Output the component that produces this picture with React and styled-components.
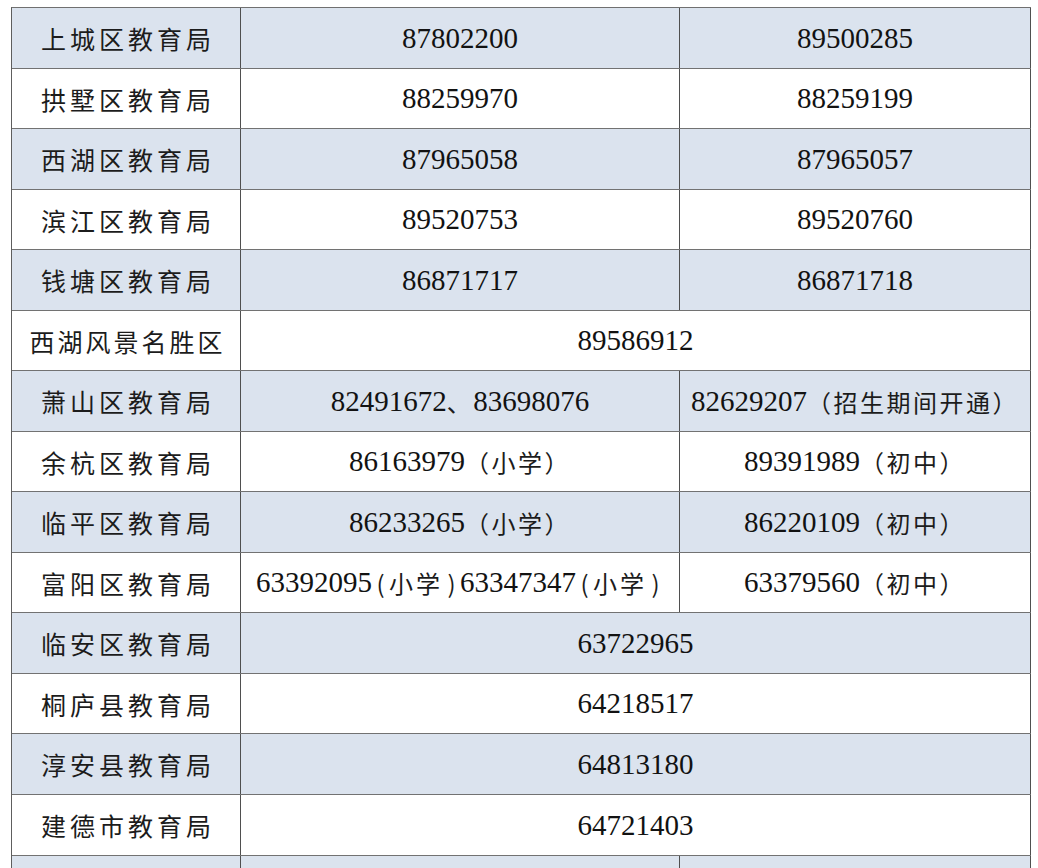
import React from "react";
import styled, { createGlobalStyle } from "styled-components";

const Global = createGlobalStyle`
  html, body { margin: 0; padding: 0; background: #ffffff; overflow: hidden; }
  body { font-family: "Liberation Serif", "Noto Sans CJK SC", serif; color: #151515; }
`;

const Table = styled.div`
  display: flex;
  flex-direction: column;
  width: 1020px;
  margin: 7px 0 0 11px;
  box-sizing: border-box;
  border-top: 1px solid #707070;
  border-left: 1px solid #5e5e5e;
`;

const Row = styled.div`
  display: grid;
  grid-template-columns: 229px 439px 351px;
  height: ${(p) => p.$h}px;
  box-sizing: border-box;
  border-bottom: ${(p) => (p.$open ? "none" : "1px solid #727272")};
  background: ${(p) => (p.$shaded ? "#dbe3ee" : "#ffffff")};
  flex: none;
`;

const Cell = styled.div`
  grid-column: span ${(p) => p.$span || 1};
  box-sizing: border-box;
  border-right: 1px solid #4f4f4f;
  display: flex;
  align-items: center;
  justify-content: center;
  white-space: nowrap;
  overflow: hidden;
`;

const Name = styled.span`
  font-family: "Noto Sans CJK SC", sans-serif;
  font-size: 25px;
  font-weight: 400;
  letter-spacing: ${(p) => (p.$tight ? "3px" : "4px")};
  margin-right: ${(p) => (p.$tight ? "-3px" : "-4px")};
  color: #1c1c1c;
`;

const Num = styled.span`
  font-family: "Liberation Serif", serif;
  font-size: 29px;
  color: #121212;
`;

const Note = styled.span`
  font-family: "Noto Sans CJK SC", sans-serif;
  font-size: 24px;
  letter-spacing: ${(p) => (p.$wide ? "3px" : "2.5px")};
  color: #1c1c1c;
`;

const Paren = styled.span`
  font-family: "Noto Sans CJK SC", sans-serif;
  font-size: 24px;
  display: inline-block;
  width: 17px;
  text-align: center;
  color: #1c1c1c;
`;

const Phone = ({ num, note }) => (
  <>
    <Num>{num}</Num>
    {note && <Note>（{note}）</Note>}
  </>
);

const Compact = ({ num, note }) => (
  <>
    <Num>{num}</Num>
    <Paren>(</Paren>
    <Note $wide>{note}</Note>
    <Paren>)</Paren>
  </>
);

const heights = [61, 60, 61, 60, 61, 60, 61, 60, 61, 60, 61, 60, 61, 61, 12];

const rows = [
  { name: "上城区教育局", a: <Phone num="87802200" />, b: <Phone num="89500285" /> },
  { name: "拱墅区教育局", a: <Phone num="88259970" />, b: <Phone num="88259199" /> },
  { name: "西湖区教育局", a: <Phone num="87965058" />, b: <Phone num="87965057" /> },
  { name: "滨江区教育局", a: <Phone num="89520753" />, b: <Phone num="89520760" /> },
  { name: "钱塘区教育局", a: <Phone num="86871717" />, b: <Phone num="86871718" /> },
  { name: "西湖风景名胜区", tight: true, a: <Phone num="89586912" /> },
  {
    name: "萧山区教育局",
    a: (
      <>
        <Num>82491672</Num>
        <Note>、</Note>
        <Num>83698076</Num>
      </>
    ),
    b: <Phone num="82629207" note="招生期间开通" />,
  },
  { name: "余杭区教育局", a: <Phone num="86163979" note="小学" />, b: <Phone num="89391989" note="初中" /> },
  { name: "临平区教育局", a: <Phone num="86233265" note="小学" />, b: <Phone num="86220109" note="初中" /> },
  {
    name: "富阳区教育局",
    a: (
      <>
        <Compact num="63392095" note="小学" />
        <Compact num="63347347" note="小学" />
      </>
    ),
    b: <Phone num="63379560" note="初中" />,
  },
  { name: "临安区教育局", a: <Phone num="63722965" /> },
  { name: "桐庐县教育局", a: <Phone num="64218517" /> },
  { name: "淳安县教育局", a: <Phone num="64813180" /> },
  { name: "建德市教育局", a: <Phone num="64721403" /> },
  { name: "", a: null, b: null, open: true },
];

export default function App() {
  return (
    <>
      <Global />
      <Table>
        {rows.map((r, i) => (
          <Row key={i} $h={heights[i]} $shaded={i % 2 === 0} $open={r.open}>
            <Cell>
              <Name $tight={r.tight}>{r.name}</Name>
            </Cell>
            {r.b !== undefined ? (
              <>
                <Cell>{r.a}</Cell>
                <Cell>{r.b}</Cell>
              </>
            ) : (
              <Cell $span={2}>{r.a}</Cell>
            )}
          </Row>
        ))}
      </Table>
    </>
  );
}
